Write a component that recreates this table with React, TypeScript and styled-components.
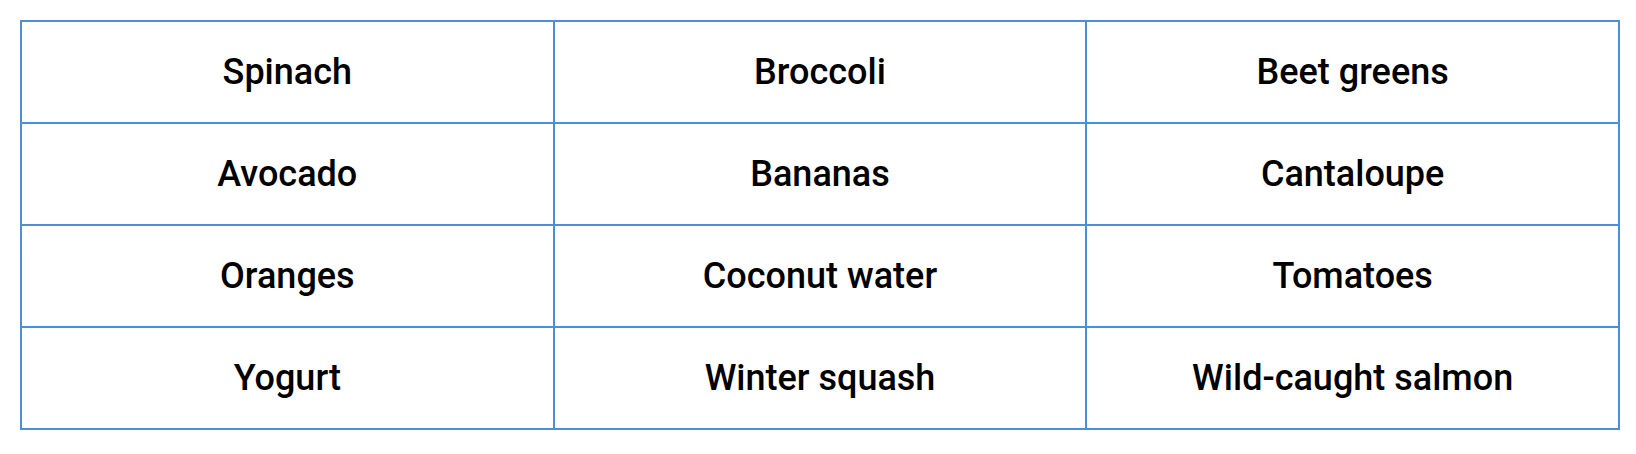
import React from "react";
import styled, { createGlobalStyle } from "styled-components";

const Global = createGlobalStyle`
  html, body { margin: 0; padding: 0; background: #ffffff; }
  body { padding: 20px; font-family: Roboto, "Liberation Sans", sans-serif; }
`;

const Table = styled.table`
  width: 1600px;
  border-collapse: collapse;
  table-layout: fixed;
  border: 2px solid #4a8fd8;
`;

const Cell = styled.td`
  border: 2px solid #4a8fd8;
  height: 100px;
  padding: 0;
  text-align: center;
  vertical-align: middle;
  font-family: Roboto, "Liberation Sans", sans-serif;
  font-weight: 500;
  font-size: 36px;
  color: #000000;
`;

const rows = [
  ["Spinach", "Broccoli", "Beet greens"],
  ["Avocado", "Bananas", "Cantaloupe"],
  ["Oranges", "Coconut water", "Tomatoes"],
  ["Yogurt", "Winter squash", "Wild-caught salmon"],
];

export default function App() {
  return (
    <>
      <Global />
      <Table>
        <tbody>
          {rows.map((r, i) => (
            <tr key={i}>
              {r.map((c) => (
                <Cell key={c}>{c}</Cell>
              ))}
            </tr>
          ))}
        </tbody>
      </Table>
    </>
  );
}
